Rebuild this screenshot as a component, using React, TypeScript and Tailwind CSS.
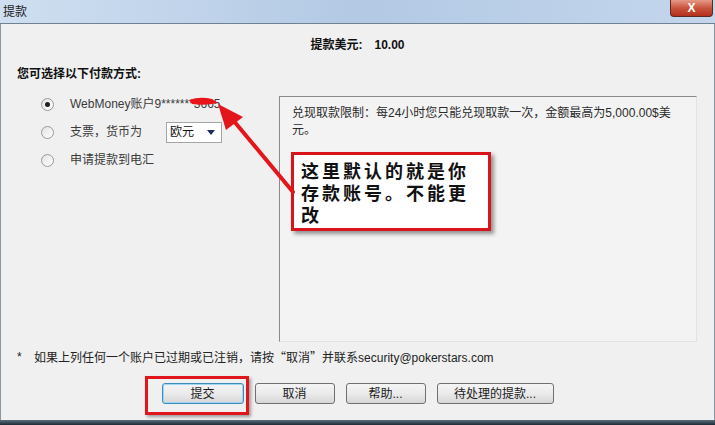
import React from "react";

const font = { fontFamily: '"Liberation Sans", "Noto Sans CJK SC", sans-serif' };
const cjk = { fontFamily: '"Noto Sans CJK SC", sans-serif' };

const Radio = ({ checked }: { checked?: boolean }) => (
	<span className="w-[13px] h-[13px] rounded-full border border-[#9a9a9a] bg-gradient-to-br from-[#e2e2e2] to-[#ffffff] flex items-center justify-center shrink-0">
		{checked && <span className="w-[5px] h-[5px] rounded-full bg-[#1f1f1f]" />}
	</span>
);

const Button = ({ label, width, focused }: { label: string; width: string; focused?: boolean }) => (
	<button
		className={`${width} h-[21px] rounded-[3px] border text-[12px] text-[#1a1a1a] bg-gradient-to-b from-[#f4f4f4] via-[#ebebeb] to-[#d6d6d6] ${
			focused ? "border-[#3c8dbc] shadow-[inset_0_0_0_1px_#9fd6f5]" : "border-[#707070]"
		}`}
	>
		{label}
	</button>
);

export default function App() {
	return (
		<div className="w-[715px] h-[425px] relative flex flex-col bg-[#f0f0f0] overflow-hidden" style={font}>
			{/* Title bar */}
			<div className="h-[24px] shrink-0 flex items-center pl-[3px] bg-gradient-to-r from-[#cfdff1] via-[#b3c9e4] to-[#c3d6ec] border-b border-[#6f8193] relative">
				<span className="text-[12px] text-[#1b1b1b] mt-[1px]">提款</span>
				<div className="absolute right-[2px] top-0 w-[43px] h-[17px] rounded-b-[4px] border border-t-0 border-[#5b2a22] bg-gradient-to-b from-[#e49a88] via-[#c9533c] to-[#b3301c] flex items-center justify-center">
					<span className="text-white font-bold text-[12px] leading-none" style={{ fontFamily: '"Liberation Sans", sans-serif' }}>X</span>
				</div>
			</div>

			{/* Body */}
			<div className="flex-1 flex flex-col border-l border-r border-[#8a96a3] px-[16px]">
				<div className="pt-[13px] h-[29px] flex justify-center gap-[12px] text-[12px] font-bold text-[#111] leading-4">
					<span>提款美元:</span>
					<span>10.00</span>
				</div>
				<div className="mt-[13px] text-[12px] font-bold text-[#111] leading-4">您可选择以下付款方式:</div>

				<div className="mt-[6px] flex">
					<div className="w-[262px] flex flex-col pl-[24px] pt-[2px] text-[12px] text-[#3a3a3a]">
						<div className="h-[28px] flex items-center gap-[16px]">
							<Radio checked />
							<span>WebMoney账户9*******3665</span>
						</div>
						<div className="h-[28px] flex items-center gap-[16px]">
							<Radio />
							<span className="w-[80px]">支票，货币为</span>
							<div className="w-[56px] h-[21px] bg-white border border-[#a5a5a5] flex items-center justify-between pl-[3px] pr-[6px] text-[#111]">
								<span>欧元</span>
								<span className="w-0 h-0 border-l-[4px] border-r-[4px] border-t-[5px] border-l-transparent border-r-transparent border-t-[#1e2a5a]" />
							</div>
						</div>
						<div className="h-[28px] flex items-center gap-[16px]">
							<Radio />
							<span>申请提款到电汇</span>
						</div>
					</div>
					<div className="mt-[8px] w-[418px] h-[246px] border border-t-[#8a8a8a] border-l-[#8a8a8a] border-r-[#e3e3e3] border-b-[#e3e3e3] bg-[#f3f3f3] px-[12px] pt-[8px] text-[12px] text-[#2a2a2a] leading-[17px]">
						兑现取款限制：每24小时您只能兑现取款一次，金额最高为5,000.00$美元。
					</div>
				</div>

				<div className="mt-[7px] h-4 leading-4 text-[12px] text-[#222] flex">
					<span className="w-[17px]">*</span>
					<span>
						如果上列任何一个账户已过期或已注销，请按<span style={cjk}>“取消”</span>并联系security@pokerstars.com
					</span>
				</div>

				<div className="mt-[18px] flex justify-center gap-[11px]">
					<Button label="提交" width="w-[82px]" focused />
					<Button label="取消" width="w-[80px]" />
					<Button label="帮助..." width="w-[80px]" />
					<Button label="待处理的提款..." width="w-[117px]" />
				</div>
			</div>

			{/* bottom edge */}
			<div className="h-[5px] shrink-0 bg-gradient-to-b from-[#5d6f80] to-[#1d2a35]" />

			{/* Annotation overlays */}
			<div className="absolute left-[145px] top-[376px] w-[104px] h-[39px] border-[3px] border-[#e0161c] shadow-[2px_2px_3px_rgba(0,0,0,0.35)]" />

			<div
				className="absolute left-[291px] top-[152px] w-[200px] h-[79px] bg-white border-[3px] border-[#d9141b] shadow-[3px_3px_4px_rgba(0,0,0,0.4)] pl-[7px] pt-[4px] text-[18px] font-bold text-[#111] tracking-[3px]"
				style={cjk}
			>
				<div className="h-[22px] leading-[22px]">这里默认的就是你</div>
				<div className="h-[22px] leading-[22px]">存款账号。不能更</div>
				<div className="h-[22px] leading-[22px]">改</div>
			</div>

			<svg className="absolute left-0 top-0 pointer-events-none" width="715" height="425">
				<path d="M189 100 Q200 96 212 99 L218 103 Q205 106 192 104 Z" fill="#e8141a" />
				<line x1="233" y1="120" x2="293" y2="192" stroke="#e3161c" strokeWidth="4" strokeLinecap="round" />
				<polygon points="218,104 226,130 243,117" fill="#e3161c" />
			</svg>
		</div>
	);
}
